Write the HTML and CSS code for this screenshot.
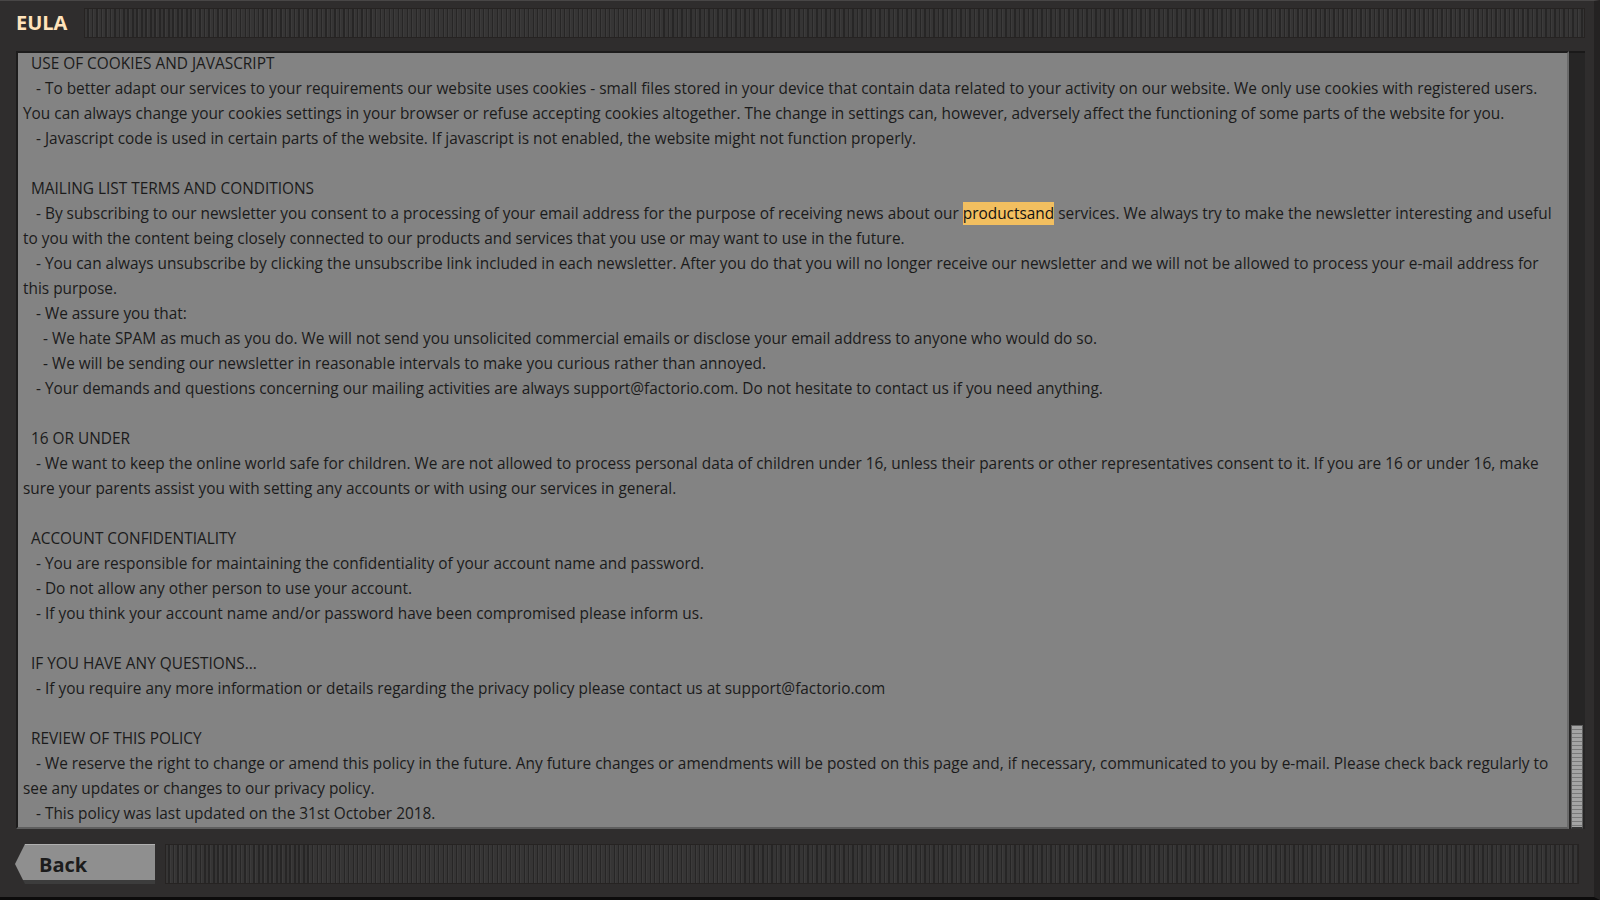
FILE: index.html
```html
<!DOCTYPE html>
<html lang="en">
<head>
    <meta charset="UTF-8">
    <title>EULA</title>
    <link rel="stylesheet" href="styles.css">
</head>
<body>
    <div class="window">
        <div class="titlebar">
            <h1 class="title">EULA</h1>
            <div class="ribbed"></div>
        </div>
        <div class="content-row">
            <div class="eula-text">
                <div class="scroll-body">
                    <p class="heading">USE OF COOKIES AND JAVASCRIPT</p>
                    <p class="item">- To better adapt our services to your requirements our website uses cookies - small files stored in your device that contain data related to your activity on our website. We only use cookies with registered users. You can always change your cookies settings in your browser or refuse accepting cookies altogether. The change in settings can, however, adversely affect the functioning of some parts of the website for you.</p>
                    <p class="item">- Javascript code is used in certain parts of the website. If javascript is not enabled, the website might not function properly.</p>
                    <p class="blank"></p>
                    <p class="heading">MAILING LIST TERMS AND CONDITIONS</p>
                    <p class="item">- By subscribing to our newsletter you consent to a processing of your email address for the purpose of receiving news about our <span class="mark">productsand</span> services. We always try to make the newsletter interesting and useful to you with the content being closely connected to our products and services that you use or may want to use in the future.</p>
                    <p class="item">- You can always unsubscribe by clicking the unsubscribe link included in each newsletter. After you do that you will no longer receive our newsletter and we will not be allowed to process your e-mail address for this purpose.</p>
                    <p class="item">- We assure you that:</p>
                    <p class="subitem">- We hate SPAM as much as you do. We will not send you unsolicited commercial emails or disclose your email address to anyone who would do so.</p>
                    <p class="subitem">- We will be sending our newsletter in reasonable intervals to make you curious rather than annoyed.</p>
                    <p class="item">- Your demands and questions concerning our mailing activities are always support@factorio.com. Do not hesitate to contact us if you need anything.</p>
                    <p class="blank"></p>
                    <p class="heading">16 OR UNDER</p>
                    <p class="item">- We want to keep the online world safe for children. We are not allowed to process personal data of children under 16, unless their parents or other representatives consent to it. If you are 16 or under 16, make sure your parents assist you with setting any accounts or with using our services in general.</p>
                    <p class="blank"></p>
                    <p class="heading">ACCOUNT CONFIDENTIALITY</p>
                    <p class="item">- You are responsible for maintaining the confidentiality of your account name and password.</p>
                    <p class="item">- Do not allow any other person to use your account.</p>
                    <p class="item">- If you think your account name and/or password have been compromised please inform us.</p>
                    <p class="blank"></p>
                    <p class="heading">IF YOU HAVE ANY QUESTIONS...</p>
                    <p class="item">- If you require any more information or details regarding the privacy policy please contact us at support@factorio.com</p>
                    <p class="blank"></p>
                    <p class="heading">REVIEW OF THIS POLICY</p>
                    <p class="item">- We reserve the right to change or amend this policy in the future. Any future changes or amendments will be posted on this page and, if necessary, communicated to you by e-mail. Please check back regularly to see any updates or changes to our privacy policy.</p>
                    <p class="item">- This policy was last updated on the 31st October 2018.</p>
                </div>
            </div>
            <div class="scrollbar">
                <div class="thumb"></div>
            </div>
        </div>
        <div class="footer">
            <button class="back-button">Back</button>
            <div class="ribbed"></div>
        </div>
    </div>
</body>
</html>
```

FILE: styles.css
```css
html, body {
    margin: 0;
    padding: 0;
    background: #111;
}
.window {
    width: 1600px;
    height: 900px;
    box-sizing: border-box;
    background: #2f2d2d;
    border-top: 1px solid #484646;
    border-bottom: 3px solid #0c0b0b;
    border-right: 6px solid #242222;
    display: flex;
    flex-direction: column;
    padding: 7px 9px 0 16px;
    font-family: "Open Sans", sans-serif;
}

/* title row */
.titlebar {
    display: flex;
    align-items: center;
    gap: 17px;
    height: 30px;
    margin-bottom: 13px;
}
.title {
    margin: 0;
    font-size: 20px;
    font-weight: bold;
    color: #ffe3bb;
    line-height: 30px;
}
.ribbed {
    flex: 1;
    align-self: stretch;
    border: 1px solid #262322;
    background: repeating-linear-gradient(90deg, #363535 0, #363535 2px, #272626 2px, #272626 3.5px, #3c3b3b 3.5px, #3c3b3b 4.5px);
}

/* text panel + scrollbar */
.content-row {
    display: flex;
    height: 778px;
}
.eula-text {
    flex: 1;
    background: #838383;
    border-top: 2px solid #1d1c1c;
    border-left: 2px solid #1d1c1c;
    border-bottom: 2px solid #5e5e5e;
    border-right: 2px solid #6a6a6a;
    overflow: hidden;
    padding: 0 6px 0 5px;
    color: #1b1b1b;
    font-size: 15.4px;
    line-height: 25px;
}
/* content is scrolled a couple of pixels down */
.scroll-body {
    margin-top: -2px;
}
.eula-text p {
    margin: 0;
}
.eula-text .heading {
    text-indent: 8px;
}
.eula-text .item {
    text-indent: 13px;
}
.eula-text .subitem {
    text-indent: 20px;
}
.eula-text .blank {
    height: 25px;
}
.mark {
    background: #f2bf60;
    color: #111;
    padding: 1px 0;
}
.scrollbar {
    width: 16px;
    background: #262525;
    border-top: 2px solid #1a1919;
    display: flex;
    flex-direction: column;
    justify-content: flex-end;
    align-items: center;
}
.thumb {
    width: 12px;
    height: 104px;
    box-sizing: border-box;
    border: 1px solid #5f5f5f;
    border-bottom: 2px solid #333;
    background: repeating-linear-gradient(180deg, #a4a4a4 0, #a4a4a4 3px, #7a7a7a 3px, #7a7a7a 4px);
}

/* bottom row */
.footer {
    display: flex;
    gap: 10px;
    height: 40px;
    margin-top: 15px;
    margin-left: -1px;
    margin-right: 6px;
}
.back-button {
    width: 140px;
    border: none;
    padding: 0 0 0 24px;
    text-align: left;
    font-family: "Open Sans", sans-serif;
    font-size: 20px;
    font-weight: bold;
    color: #1c1c1c;
    background: linear-gradient(180deg, #b0b0b0 0, #b0b0b0 1px, #8f8f8f 1px, #8f8f8f 36px, #3c3c3c 36px);
    clip-path: polygon(10px 0, 100% 0, 100% 100%, 10px 100%, 0 50%);
    cursor: pointer;
}
```
